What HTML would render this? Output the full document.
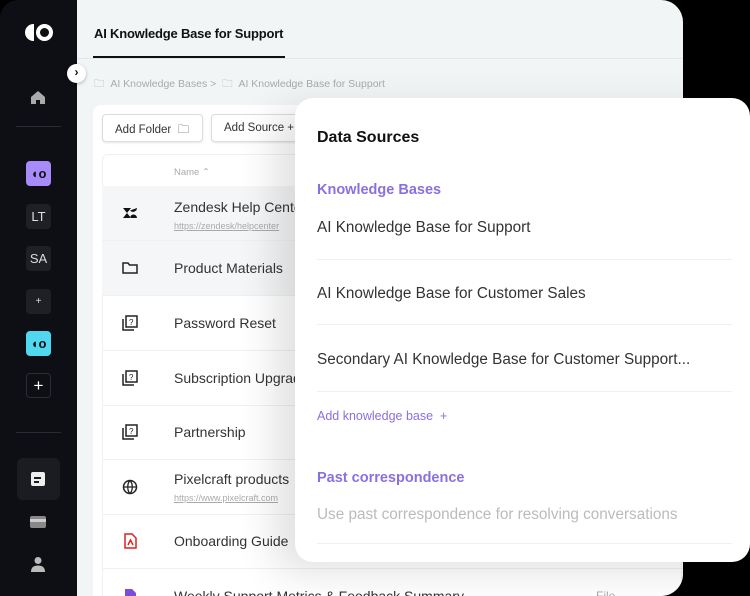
<!DOCTYPE html>
<html><head><style>
*{margin:0;padding:0;box-sizing:border-box}
body{width:750px;height:596px;background:#000;font-family:"Liberation Sans",sans-serif;position:relative;overflow:hidden}
.sb{position:absolute;left:0;top:0;width:77px;height:596px;background:#0d0f14;border-top-left-radius:18px}
.main{position:absolute;left:77px;top:0;width:606px;height:596px;background:#f1f5f6;border-top-right-radius:22px;border-bottom-right-radius:22px;overflow:hidden}
.ic{position:absolute;left:26px;width:25px;height:25px;border-radius:4px;color:#ddd;font-size:13px;display:flex;align-items:center;justify-content:center}
.pop{position:absolute;left:295px;top:98px;width:455px;height:464px;background:#fff;border-radius:18px;box-shadow:-20px 10px 40px rgba(0,0,0,.12)}
.row{position:absolute;left:25px;width:669px;height:55px;border-bottom:1px solid #eef0f1;font-size:14px;color:#333}
.row .t{position:absolute;left:72px;top:19px}
.row .u{position:absolute;left:72px;top:38px;font-size:9px;color:#aaa;text-decoration:underline}
.row .i{position:absolute;left:20px;top:19px;width:16px;height:16px}
.pi{position:absolute;left:22px;font-size:15.3px;color:#333}
.ln{position:absolute;left:22px;right:18px;height:1px;background:#eef0f1}
</style></head><body>
<div class="sb">
 <div style="position:absolute;left:25px;top:24px;width:9px;height:17px;background:#fff;border-radius:9px 0 0 9px"></div>
 <div style="position:absolute;left:36px;top:24px;width:17px;height:17px;border:4.5px solid #fff;border-radius:50%"></div>
 <svg style="position:absolute;left:30px;top:89px" width="16" height="16" viewBox="0 0 16 16"><path d="M1 8L8 2l7 6v7H10v-4H6v4H1z" fill="#aaa"/></svg>
 <div style="position:absolute;left:16px;top:126px;width:45px;height:1px;background:#2a2c33"></div>
 <div class="ic" style="top:161px;background:#a78bfa;color:#111;font-weight:bold">◖o</div>
 <div class="ic" style="top:204px;background:#1e2026">LT</div>
 <div class="ic" style="top:246px;background:#1e2026">SA</div>
 <div class="ic" style="top:289px;background:#1e2026;font-size:10px">+</div>
 <div class="ic" style="top:331px;background:#4fd8f0;color:#111;font-weight:bold">◖o</div>
 <div class="ic" style="top:373px;background:#0d0f14;border:1px solid #2a2c33;color:#fff;font-size:17px">+</div>
 <div style="position:absolute;left:16px;top:432px;width:45px;height:1px;background:#2a2c33"></div>
 <div style="position:absolute;left:17px;top:458px;width:43px;height:42px;background:#1a1c22;border-radius:6px"></div>
 <div style="position:absolute;left:31px;top:472px;width:14px;height:14px;background:#eee;border-radius:2px"></div>
 <div style="position:absolute;left:34px;top:477px;width:7px;height:1.5px;background:#1a1c22"></div>
 <div style="position:absolute;left:34px;top:481px;width:5px;height:1.5px;background:#1a1c22"></div>
 <div style="position:absolute;left:30px;top:516px;width:16px;height:12px;background:#888;border-radius:2px"></div>
 <div style="position:absolute;left:30px;top:519px;width:16px;height:3px;background:#ccc"></div>
 <svg style="position:absolute;left:30px;top:556px" width="16" height="16" viewBox="0 0 16 16"><circle cx="8" cy="4.5" r="3.5" fill="#bbb"/><path d="M1 16c0-5 3-6.5 7-6.5s7 1.5 7 6.5z" fill="#bbb"/></svg>
</div>
<div class="main">
 <div style="position:absolute;left:17px;top:26px;font-size:13px;font-weight:bold;color:#111;letter-spacing:-.2px">AI Knowledge Base for Support</div>
 <div style="position:absolute;left:16px;top:56px;width:192px;height:2px;background:#111"></div>
 <div style="position:absolute;left:0;top:58px;width:606px;height:1px;background:#e2e8ea"></div>
 <div style="position:absolute;left:17px;top:76px;font-size:10.5px;color:#aaa">🗀 &nbsp;AI Knowledge Bases &gt; &nbsp;🗀 &nbsp;AI Knowledge Base for Support</div>
 <div style="position:absolute;left:16px;top:105px;width:590px;height:500px;background:#fff;border-radius:8px"></div>
 <div style="position:absolute;left:25px;top:114px;width:101px;height:28px;border:1px solid #ddd;border-radius:4px;background:#fff;box-shadow:0 1px 2px rgba(0,0,0,.1);font-size:11.5px;color:#333;padding:7px 12px">Add Folder &nbsp;🗀</div>
 <div style="position:absolute;left:134px;top:114px;width:100px;height:28px;border:1px solid #ddd;border-radius:4px;background:#fff;box-shadow:0 1px 2px rgba(0,0,0,.1);font-size:11.5px;color:#333;padding:7px 12px">Add Source +</div>
 <div style="position:absolute;left:25px;top:154px;width:580px;height:450px;border:1px solid #eef0f1;border-radius:6px"></div>
 <div style="position:absolute;left:97px;top:167px;font-size:9.5px;color:#aaa">Name ⌃</div>
 <div class="row" style="top:186px;background:#f4f6f7"><svg class="i" viewBox="0 0 16 16"><path d="M1 3h8L1 13h8zM15 3a4 4 0 01-7 2.5zM8 13a3.5 3.5 0 017 0z" fill="#111"/></svg><div class="t" style="top:13px">Zendesk Help Center</div><div class="u" style="top:35px">https://zendesk/helpcenter</div></div>
 <div class="row" style="top:241px;background:#f4f6f7"><div class="t">Product Materials</div><svg class="i" viewBox="0 0 16 16"><path d="M1 3h5l1.5 2H15v8H1z" fill="none" stroke="#222" stroke-width="1.5"/></svg></div>
 <div class="row" style="top:296px"><div class="t">Password Reset</div><svg class="i" viewBox="0 0 16 16"><rect x="4" y="1" width="11" height="11" fill="none" stroke="#222" stroke-width="1.5"/><path d="M1 4v11h11" fill="none" stroke="#222" stroke-width="1.5"/><text x="7" y="10" font-size="8" fill="#222">?</text></svg></div>
 <div class="row" style="top:351px"><div class="t">Subscription Upgrade</div><svg class="i" viewBox="0 0 16 16"><rect x="4" y="1" width="11" height="11" fill="none" stroke="#222" stroke-width="1.5"/><path d="M1 4v11h11" fill="none" stroke="#222" stroke-width="1.5"/><text x="7" y="10" font-size="8" fill="#222">?</text></svg></div>
 <div class="row" style="top:405px"><div class="t">Partnership</div><svg class="i" viewBox="0 0 16 16"><rect x="4" y="1" width="11" height="11" fill="none" stroke="#222" stroke-width="1.5"/><path d="M1 4v11h11" fill="none" stroke="#222" stroke-width="1.5"/><text x="7" y="10" font-size="8" fill="#222">?</text></svg></div>
 <div class="row" style="top:460px"><div class="t" style="top:11px">Pixelcraft products</div><div class="u" style="top:33px">https://www.pixelcraft.com</div><svg class="i" viewBox="0 0 16 16"><circle cx="8" cy="8" r="6.5" fill="none" stroke="#222" stroke-width="1.5"/><path d="M1.5 8h13M8 1.5c-3 3-3 10 0 13M8 1.5c3 3 3 10 0 13" fill="none" stroke="#222" stroke-width="1.3"/></svg></div>
 <div class="row" style="top:514px"><div class="t">Onboarding Guide</div><svg class="i" viewBox="0 0 16 16"><path d="M3 1h7l4 4v10H3z" fill="none" stroke="#d22" stroke-width="1.5"/><path d="M6 12l2.5-5 2.5 5" fill="none" stroke="#d22" stroke-width="1.5"/></svg></div>
 <div class="row" style="top:569px;border:none"><div class="t">Weekly Support Metrics &amp; Feedback Summary</div><div style="position:absolute;left:494px;top:20px;font-size:12px;color:#aaa">File</div><svg class="i" viewBox="0 0 16 16"><path d="M3 1h7l4 4v10H3z" fill="#7c4ddb"/></svg></div>
</div>
<div style="position:absolute;left:67px;top:64px;width:19px;height:19px;border-radius:50%;background:#fff;box-shadow:0 1px 3px rgba(0,0,0,.3);font-size:12px;font-weight:bold;color:#111;text-align:center;line-height:17px">›</div>
<div class="pop">
 <div class="pi" style="top:31px;font-size:16px;font-weight:bold;color:#111">Data Sources</div>
 <div class="pi" style="top:84px;font-weight:bold;color:#8b6fe0;font-size:14.5px">Knowledge Bases</div>
 <div class="pi" style="top:121px">AI Knowledge Base for Support</div>
 <div class="ln" style="top:161px"></div>
 <div class="pi" style="top:187px">AI Knowledge Base for Customer Sales</div>
 <div class="ln" style="top:226px"></div>
 <div class="pi" style="top:253px">Secondary AI Knowledge Base for Customer Support...</div>
 <div class="ln" style="top:293px"></div>
 <div class="pi" style="top:311px;font-size:12.5px;color:#8b6fe0">Add knowledge base &nbsp;+</div>
 <div class="pi" style="top:372px;font-weight:bold;color:#8b6fe0;font-size:14.5px">Past correspondence</div>
 <div class="pi" style="top:408px;color:#bbb">Use past correspondence for resolving conversations</div>
 <div class="ln" style="top:445px"></div>
</div>
</body></html>
